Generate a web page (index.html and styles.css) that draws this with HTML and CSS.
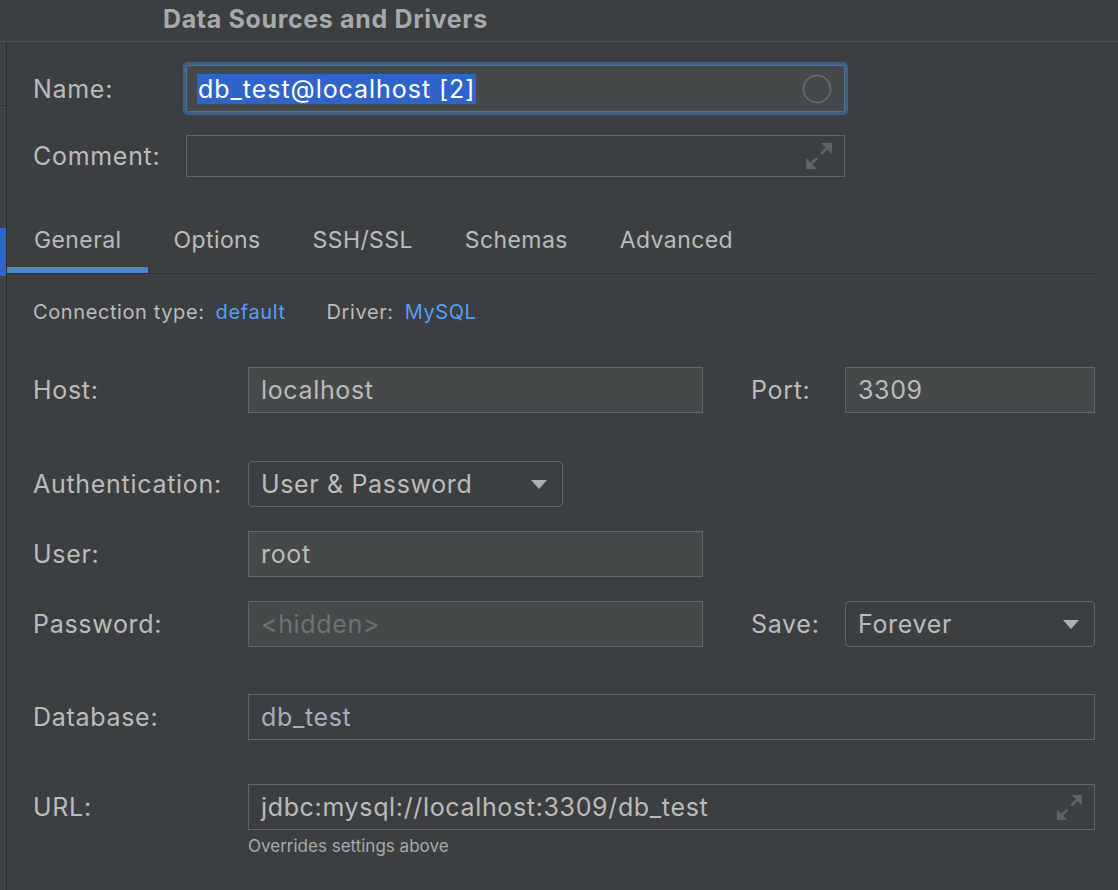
FILE: index.html
```html
<!DOCTYPE html>
<html>
<head>
<meta charset="utf-8">
<link rel="stylesheet" href="styles.css">
</head>
<body>
<div class="titlebar"><span class="title">Data Sources and Drivers</span></div>
<div class="main">
  <div class="sidebar">
    <div class="sb-item"></div>
    <div class="sb-sel"></div>
  </div>
  <div class="content">
    <div class="hrow name-row">
      <span class="hlabel">Name:</span>
      <div class="name-field">
        <span class="sel">db_test@localhost [2]</span>
        <svg class="circle" width="30" height="30" viewBox="0 0 30 30"><circle cx="15" cy="15" r="13.5" fill="none" stroke="#6b6e70" stroke-width="1.6"/></svg>
      </div>
    </div>
    <div class="hrow comment-row">
      <span class="hlabel">Comment:</span>
      <div class="comment-field">
        <svg class="expand" width="26" height="26" viewBox="0 0 26 26"><polygon points="15,0 26,0 26,11" fill="#5e6466"/><line x1="23" y1="3" x2="15" y2="11" stroke="#5e6466" stroke-width="2.6"/><polygon points="0,15 0,26 11,26" fill="#5e6466"/><line x1="3" y1="23" x2="11" y2="15" stroke="#5e6466" stroke-width="2.6"/></svg>
      </div>
    </div>
    <div class="tabs">
      <div class="tab active">General</div>
      <div class="tab">Options</div>
      <div class="tab">SSH/SSL</div>
      <div class="tab">Schemas</div>
      <div class="tab">Advanced</div>
    </div>
    <div class="conn">
      <span>Connection type:</span><span class="link">default</span>
      <span class="drv">Driver:</span><span class="link">MySQL</span>
    </div>
    <div class="frow r-host">
      <span class="flabel">Host:</span>
      <div class="field">localhost</div>
      <span class="flabel col4">Port:</span>
      <div class="field col5">3309</div>
    </div>
    <div class="frow r-auth">
      <span class="flabel">Authentication:</span>
      <div class="field dropdown auth-dd">User &amp; Password
        <svg class="arrow" width="16" height="9" viewBox="0 0 16 9"><polygon points="0,0 16,0 8,9" fill="#aeb0b2"/></svg>
      </div>
    </div>
    <div class="frow r-user">
      <span class="flabel">User:</span>
      <div class="field">root</div>
    </div>
    <div class="frow r-pass">
      <span class="flabel">Password:</span>
      <div class="field placeholder">&lt;hidden&gt;</div>
      <span class="flabel col4">Save:</span>
      <div class="field dropdown col5">Forever
        <svg class="arrow" width="16" height="9" viewBox="0 0 16 9"><polygon points="0,0 16,0 8,9" fill="#aeb0b2"/></svg>
      </div>
    </div>
    <div class="frow r-db">
      <span class="flabel">Database:</span>
      <div class="field flat wide dbval">db_test</div>
    </div>
    <div class="frow r-url">
      <span class="flabel">URL:</span>
      <div class="field flat wide url">jdbc:mysql://localhost:3309/db_test
        <svg class="expand" width="25" height="25" viewBox="0 0 26 26"><polygon points="15,0 26,0 26,11" fill="#5e6466"/><line x1="23" y1="3" x2="15" y2="11" stroke="#5e6466" stroke-width="2.6"/><polygon points="0,15 0,26 11,26" fill="#5e6466"/><line x1="3" y1="23" x2="11" y2="15" stroke="#5e6466" stroke-width="2.6"/></svg>
      </div>
    </div>
    <div class="hint">Overrides settings above</div>
  </div>
</div>
</body>
</html>
```
FILE: styles.css
```css
html, body {
  margin: 0;
  padding: 0;
}
body {
  background: #3c3f41;
  color: #bbbbbb;
  font-family: Inter, "Noto Sans", "Liberation Sans", sans-serif;
  width: 1118px;
  height: 890px;
  overflow: hidden;
}
.titlebar {
  height: 42px;
  box-sizing: border-box;
  border-bottom: 1px solid #505254;
  display: flex;
  align-items: center;
  padding-left: 163px;
  padding-bottom: 4px;
}
.title {
  font-weight: 700;
  font-size: 25px;
  letter-spacing: 0.65px;
  color: #a8a9aa;
}
.main {
  display: flex;
  height: 848px;
}
.sidebar {
  width: 6px;
  flex-shrink: 0;
  background: #3e4248;
  border-right: 1px solid #2b2c2e;
  display: flex;
  flex-direction: column;
}
.sb-item {
  height: 63px;
  border-bottom: 1px solid #2e3033;
}
.sb-sel {
  margin-top: 122px;
  height: 48px;
  background: #2f65ca;
}
.content {
  flex: 1;
  padding-right: 23px;
}
.hrow {
  display: flex;
  align-items: center;
  padding-left: 26px;
}
.hlabel {
  width: 153px;
  font-size: 25px;
  letter-spacing: 0.7px;
}
.name-row {
  margin-top: 23px;
}
.name-field {
  width: 659px;
  height: 47px;
  box-sizing: border-box;
  background: #45494a;
  border: 1px solid #4d7398;
  box-shadow: 0 0 0 3px #3d6185;
  border-radius: 2px;
  display: flex;
  align-items: center;
  justify-content: space-between;
  padding: 0 12px 0 10px;
}
.sel {
  background: #2f65ca;
  color: #ffffff;
  font-size: 25px;
  letter-spacing: 0.95px;
  line-height: 30px;
  padding: 0 1px;
}
.comment-row {
  margin-top: 23px;
}
.comment-field {
  width: 659px;
  height: 42px;
  box-sizing: border-box;
  border: 1px solid #646464;
  display: flex;
  align-items: center;
  justify-content: flex-end;
  padding-right: 12px;
}
.tabs {
  display: flex;
  margin-top: 37px;
  border-bottom: 1px solid #2f3133;
}
.tab {
  height: 59px;
  box-sizing: border-box;
  padding: 0 26px 7px 27px;
  display: flex;
  align-items: center;
  font-size: 23px;
  letter-spacing: 0.4px;
}
.tab + .tab {
  padding-left: 26px;
}
.tab.active {
  box-shadow: inset 0 -6px 0 #4a88c7;
}
.conn {
  margin-top: 26px;
  padding-left: 26px;
  font-size: 20px;
  letter-spacing: 0.6px;
  line-height: 24px;
  display: flex;
}
.conn .link {
  color: #589df6;
  margin-left: 11px;
}
.conn .drv {
  margin-left: 41px;
}
.frow {
  display: grid;
  grid-template-columns: 215px 455px 48px 94px 250px;
  align-items: center;
  padding-left: 26px;
  height: 46px;
}
.flabel {
  font-size: 25px;
  letter-spacing: 0.7px;
}
.col4 { grid-column: 4; }
.col5 { grid-column: 5; }
.field {
  height: 46px;
  box-sizing: border-box;
  border: 1px solid #646464;
  background: #45494a;
  padding-left: 12px;
  display: flex;
  align-items: center;
  font-size: 25px;
  letter-spacing: 0.65px;
  color: #bbbbbb;
}
.field.flat {
  background: transparent;
}
.field.wide {
  grid-column: 2 / span 4;
}
.dropdown {
  background: transparent;
  border-radius: 4px;
  justify-content: space-between;
  padding-right: 15px;
}
.auth-dd {
  width: 315px;
  justify-self: start;
  grid-column: 2 / span 2;
}
.placeholder {
  color: #6f7274;
}
.dbval {
  color: #a3b0c0;
}
.url {
  justify-content: space-between;
  padding-right: 12px;
}
.r-host { margin-top: 43px; }
.r-auth { margin-top: 48px; }
.r-user { margin-top: 24px; }
.r-pass { margin-top: 24px; }
.r-db { margin-top: 47px; }
.r-url { margin-top: 44px; }
.hint {
  margin-top: 6px;
  padding-left: 241px;
  font-size: 17px;
  line-height: 20px;
  color: #a9a9a9;
}
```
